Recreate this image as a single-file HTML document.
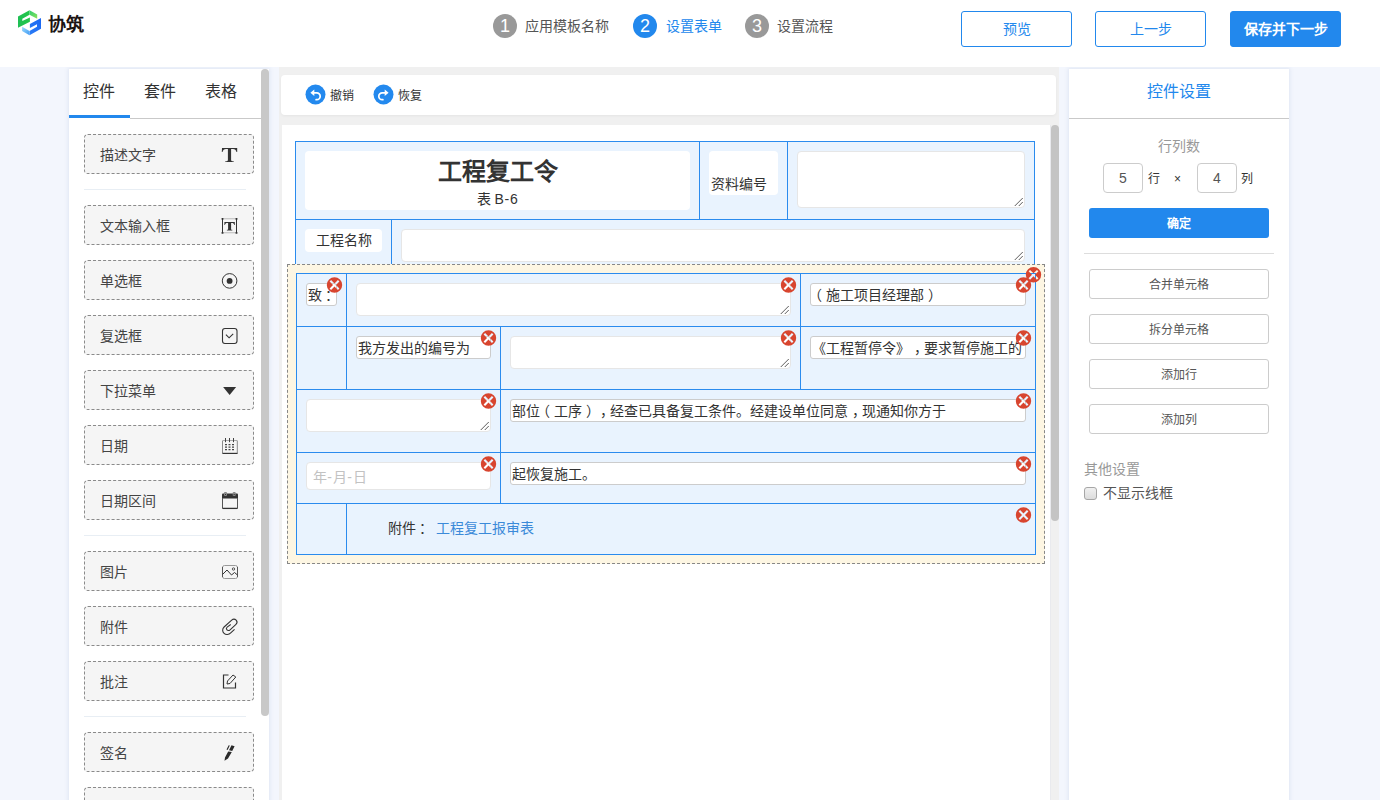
<!DOCTYPE html>
<html lang="zh-CN">
<head>
<meta charset="utf-8">
<title>设置表单</title>
<style>
*{box-sizing:border-box;margin:0;padding:0}
html,body{width:1380px;height:800px;overflow:hidden}
body{text-spacing-trim:space-all;position:relative;background:#f3f6fd;font-family:"Liberation Sans",sans-serif;font-size:14px;color:#333}
.abs{position:absolute}
.t{position:absolute;white-space:nowrap;line-height:20px;height:20px}
/* header */
#hdr{position:absolute;left:0;top:0;width:1380px;height:67px;background:#fff;z-index:5}
.stepc{position:absolute;top:14px;width:24px;height:24px;border-radius:12px;background:#999;color:#fff;font-size:18px;line-height:24px;text-align:center}
.stepc.on{background:#2288ed}
.stept{position:absolute;top:16px;line-height:20px;font-size:14px;color:#555;white-space:nowrap}
.hbtn{position:absolute;top:11px;width:111px;height:36px;border:1px solid #2288ed;border-radius:3px;background:#fff;color:#2288ed;font-size:14px;line-height:34px;text-align:center}
.hbtn.pri{background:#2288ed;color:#fff;font-weight:bold}
/* left */
#left{position:absolute;left:69px;top:69px;width:200px;height:731px;background:#fff}
#lsh{position:absolute;left:69px;top:69px;width:200px;height:740px;box-shadow:0 0 4px 1px rgba(90,120,170,.12)}
.tab{position:absolute;top:0;height:49px;width:61px;font-size:16px;line-height:46px;text-align:center;color:#333;padding-right:2px}
.item{position:absolute;left:15px;width:170px;height:40px;border:1px dashed #8a8a8a;border-radius:4px;background:#f5f5f5}
.item span{position:absolute;left:15px;top:10px;line-height:20px;font-size:14px;color:#444}
.item svg{position:absolute;left:125px;top:-1px;width:40px;height:40px;overflow:visible}
.div{position:absolute;left:15px;width:162px;height:1px;background:#e8eef4}
/* center */
#mid{position:absolute;left:279px;top:67px;width:780px;height:733px;background:#f0f0f0}
#tool{position:absolute;left:281px;top:75px;width:775px;height:40px;background:#fff;border-radius:4px;box-shadow:0 1px 3px rgba(0,0,0,.05)}
#canvas{position:absolute;left:282px;top:125px;width:769px;height:675px;background:#fff;border-right:1px solid #e9eaee}
.ln{position:absolute;background:#2a8bee}
.cell{position:absolute;background:#e9f3fe}
.wb{position:absolute;background:#fff;border-radius:4px}
.ta{position:absolute;background:#fff;border:1px solid #e6e6e6;border-radius:4px}
.inp{position:absolute;background:#fff;border:1px solid #ccc;border-radius:3px;height:23px;font-size:14px;line-height:22px;color:#333;white-space:nowrap;overflow:hidden;padding-left:1px}
.p{font-style:normal;display:inline-block;width:14px;position:relative}
.x{position:absolute;width:16px;height:16px;overflow:visible}
/* right */
#right{position:absolute;left:1069px;top:69px;width:220px;height:740px;background:#fff;box-shadow:0 0 4px 1px rgba(90,120,170,.12)}
.rbtn{position:absolute;left:20px;width:180px;height:30px;border:1px solid #ccc;border-radius:3px;background:#fff;font-size:12px;line-height:30px;text-align:center;color:#555}
.num{position:absolute;top:94px;width:40px;height:30px;border:1px solid #ccc;border-radius:4px;font-size:14px;line-height:28px;text-align:center;color:#555;background:#fff}
</style>
</head>
<body>
<!--HEADER-->
<div id="hdr">
<svg class="abs" style="left:14px;top:6px" width="32" height="34" viewBox="14 6 32 34">
<defs>
<linearGradient id="g1" x1="0" y1="0" x2="1" y2="0"><stop offset="0" stop-color="#1fbf55"/><stop offset="1" stop-color="#22c648"/></linearGradient>
<linearGradient id="g2" x1="0" y1="0" x2="1" y2="1"><stop offset="0" stop-color="#2ecc71"/><stop offset="1" stop-color="#8be35a"/></linearGradient>
<linearGradient id="g3" x1="0" y1="1" x2="1" y2="0"><stop offset="0" stop-color="#2a7df6"/><stop offset="1" stop-color="#1a66f2"/></linearGradient>
<linearGradient id="g4" x1="0" y1="0" x2="1" y2="1"><stop offset="0" stop-color="#9bd8fb"/><stop offset="1" stop-color="#3f9cf5"/></linearGradient>
</defs>
<polygon fill="url(#g1)" points="18,16.4 29.5,10.2 29.5,14.7 22.3,18.7 22.3,21.1 29.9,17.4 29.9,21.7 18,27.7"/>
<polygon fill="url(#g2)" points="29.5,10.2 37.2,14.5 37.2,18.8 29.5,14.7"/>
<polygon fill="url(#g3)" points="41,18.1 29.9,24.1 29.9,28 37,24.3 37,26.8 29.5,30.9 29.5,35.3 41,28.7"/>
<polygon fill="url(#g4)" points="22.1,26.8 29.5,30.9 29.5,35.3 22.1,31.1"/>
</svg>
<div class="t" style="left:48px;top:15px;font-size:18px;font-weight:bold;color:#1c1413;letter-spacing:0px">协筑</div>
<div class="stepc" style="left:493px">1</div><div class="stept" style="left:525px">应用模板名称</div>
<div class="stepc on" style="left:633px">2</div><div class="stept" style="left:666px;color:#2288ed">设置表单</div>
<div class="stepc" style="left:745px">3</div><div class="stept" style="left:777px">设置流程</div>
<div class="hbtn" style="left:961px">预览</div>
<div class="hbtn" style="left:1095px">上一步</div>
<div class="hbtn pri" style="left:1230px">保存并下一步</div>
</div>
<!--/HEADER-->
<!--LEFT-->
<div id="lsh"></div>
<div id="left">
<div class="tab" style="left:0;border-bottom:3px solid #2288ed">控件</div>
<div class="tab" style="left:61px">套件</div>
<div class="tab" style="left:122px">表格</div>
<div class="abs" style="left:61px;top:49px;width:131px;height:1px;background:#c9c9c9"></div>

<div class="item" style="top:65px"><span>描述文字</span>
<svg style="top:0" viewBox="0 0 40 40"><path fill="#333" d="M12 13h15.200v4h-.7c-.5-2.100-1.500-3-3.500-3h-1.900v11c0 .9.700 1.200 2.600 1.300v.7h-8.400v-.7c1.900-.1 2.600-.4 2.600-1.300v-11h-1.900c-2 0-3 .9-3.500 3h-.7z"/></svg></div>
<div class="div" style="top:120px"></div>
<div class="item" style="top:136px"><span>文本输入框</span>
<svg viewBox="0 0 40 40"><path fill="none" stroke="#bbb" stroke-width="1" d="M13 13.750h13M13 27.750h13"/><path fill="none" stroke="#333" stroke-width="1" d="M12.500 13.500v14.500M26.500 13.500v14.500"/><path fill="#333" d="M11.600 12.900h1.800v1.800h-1.800zM25.600 12.900h1.800v1.800h-1.800zM11.600 26.900h1.800v1.800h-1.800zM25.600 26.900h1.800v1.800h-1.800z"/><path fill="#333" d="M14.400 17h10.400v2.900h-.6c-.3-1.400-1-2-2.300-2h-.8v6c0 .6.300.8 1.200.9v.6h-5.400v-.6c.9-.1 1.200-.3 1.200-.9v-6h-.8c-1.300 0-2 .6-2.300 2h-.6z"/></svg></div>
<div class="item" style="top:191px"><span>单选框</span>
<svg viewBox="0 0 40 40"><circle cx="19.600" cy="20.900" r="7.300" fill="none" stroke="#333" stroke-width="1"/><circle cx="19.600" cy="20.900" r="2.900" fill="#333"/></svg></div>
<div class="item" style="top:246px"><span>复选框</span>
<svg viewBox="0 0 40 40"><rect x="12.500" y="13.500" width="14.500" height="15" rx="2.500" fill="none" stroke="#333" stroke-width="1.100"/><path d="M15.900 19.600l3.200 3.200 4.100-4" fill="none" stroke="#333" stroke-width="1.100"/></svg></div>
<div class="item" style="top:301px"><span>下拉菜单</span>
<svg viewBox="0 0 40 40"><path fill="#333" d="M13.100 17h13l-6.500 8z"/></svg></div>
<div class="item" style="top:356px"><span>日期</span>
<svg viewBox="0 0 40 40"><path fill="none" stroke="#aaa" stroke-width="1" d="M13 15.500h14"/><path fill="none" stroke="#8a8a8a" stroke-width="1" d="M12.500 15.500v13M27.300 15.500v13"/><path fill="none" stroke="#333" stroke-width="1.200" d="M12.500 28.400h15"/><path fill="none" stroke="#444" stroke-width="1" d="M15.500 13v4.200M19.500 13v4.200M23.500 13v4.200"/><path fill="#444" d="M15 19h2v1.200h-2zM18.500 19h2v1.200h-2zM22 19h2v1.200h-2zM15 21.500h2v1.200h-2zM18.500 21.500h2v1.200h-2zM22 21.500h2v1.200h-2zM15 24h2v1.200h-2zM18.500 24h2v1.200h-2zM22 24h2v1.200h-2z"/></svg></div>
<div class="item" style="top:411px"><span>日期区间</span>
<svg viewBox="0 0 40 40"><path fill="#333" d="M12 14.500q0-1 1-1h14q1 0 1 1v4h-16z"/><path fill="none" stroke="#555" stroke-width="1" d="M12.500 18v10.500M27.500 18v10.500"/><path fill="none" stroke="#333" stroke-width="1.300" d="M12.500 28.400h15"/><path fill="none" stroke="#888" stroke-width="1" d="M14.500 12.500h2v3h-2zM23.200 12.500h2v3h-2z"/></svg></div>
<div class="div" style="top:466px"></div>
<div class="item" style="top:482px"><span>图片</span>
<svg viewBox="0 0 40 40"><rect x="12.500" y="14.500" width="15" height="13" rx="2" fill="none" stroke="#999" stroke-width="1"/><path fill="none" stroke="#555" stroke-width="1" d="M12.500 16v10M27.500 16v10"/><path d="M12.500 23.500l4.500-4.500 4.500 5 3-2.500 3 2.500" fill="none" stroke="#333" stroke-width="1"/><circle cx="23.500" cy="18" r="1.200" fill="none" stroke="#444" stroke-width="0.900"/></svg></div>
<div class="item" style="top:537px"><span>附件</span>
<svg viewBox="0 0 40 40"><path d="M24.500 23.250L20.500 27C18.500 29 15.500 29.500 13.500 27.500C11.500 25.500 11.500 22.700 13.500 20.800L21.500 13.500C23 12.300 25 12.400 26.200 13.700C27.400 15 27.300 16.800 26 18L19.800 23.800C18.800 24.800 17.300 24.800 16.500 23.900C15.700 23 15.800 21.700 16.700 20.900L20.500 18.250" fill="none" stroke="#333" stroke-width="1.150" transform="translate(19.500 20.800) scale(.95) translate(-19.200 -20.600)"/></svg></div>
<div class="item" style="top:592px"><span>批注</span>
<svg viewBox="0 0 40 40"><g transform="translate(0 -.5)"><path d="M18.500 14.500h-5v13h12v-5.500" fill="none" stroke="#333" stroke-width="1.200"/><path d="M17 23.500l.5-3 5.500-6 2.800 2-5.800 6.500z" fill="none" stroke="#333" stroke-width="1"/></g></svg></div>
<div class="div" style="top:647px"></div>
<div class="item" style="top:663px"><span>签名</span>
<svg viewBox="0 0 40 40"><path fill="#2a2a2a" d="M18.200 19.500l3.600.5-3.800 6.500-3.500 2.300.5-3.300zM21.500 13.200l3.100 1-2.400 4.800-3.200-.700zM18.700 13.300l1.100.3-2.200 4.400-1.100-.400z"/></svg></div>
<div class="item" style="top:718px"></div>
</div>
<div class="abs" style="left:261px;top:69px;width:8px;height:647px;border-radius:4px;background:#c8c8c8"></div>
<!--/LEFT-->
<!--MID-->
<div id="mid"></div>
<div id="tool"></div>
<svg class="abs" style="left:305px;top:84px" width="21" height="21" viewBox="0 0 21 21"><circle cx="10.500" cy="10.500" r="10" fill="#2389ee"/><path d="M9 8.900h2.800a3.400 3.400 0 0 1 0 6.800h-.7" fill="none" stroke="#fff" stroke-width="1.700" stroke-linecap="round"/><path d="M5.400 8.800l3.900-3.300v6.600z" fill="#fff"/></svg>
<div class="t" style="left:330px;top:86px;font-size:12px;color:#333">撤销</div>
<svg class="abs" style="left:373px;top:84px" width="21" height="21" viewBox="0 0 21 21"><circle cx="10.500" cy="10.500" r="10" fill="#2389ee"/><path d="M12 8.900h-2.800a3.400 3.400 0 0 0 0 6.800h.7" fill="none" stroke="#fff" stroke-width="1.700" stroke-linecap="round"/><path d="M15.600 8.800l-3.900-3.300v6.600z" fill="#fff"/></svg>
<div class="t" style="left:398px;top:86px;font-size:12px;color:#333">恢复</div>
<div id="canvas"></div>
<div class="cell" style="left:295px;top:141px;width:740px;height:124px;"></div>
<div class="ln" style="left:295px;top:141px;width:740px;height:1px;"></div>
<div class="ln" style="left:295px;top:219px;width:740px;height:1px;"></div>
<div class="ln" style="left:295px;top:141px;width:1px;height:124px;"></div>
<div class="ln" style="left:1034px;top:141px;width:1px;height:124px;"></div>
<div class="ln" style="left:699px;top:141px;width:1px;height:78px;"></div>
<div class="ln" style="left:787px;top:141px;width:1px;height:78px;"></div>
<div class="ln" style="left:391px;top:219px;width:1px;height:46px;"></div>
<div class="wb" style="left:305px;top:151px;width:385px;height:59px;"></div>
<div class="t" style="left:305px;top:157px;width:385px;text-align:center;font-size:24px;font-weight:bold;line-height:30px;height:30px;color:#333">工程复工令</div>
<div class="t" style="left:305px;top:189px;width:385px;text-align:center;font-size:14px;color:#333">表 <span style="letter-spacing:.7px">B-6</span></div>
<div class="wb" style="left:709px;top:151px;width:69px;height:44px;"></div>
<div class="t" style="left:711px;top:174px;color:#333">资料编号</div>
<div class="ta" style="left:797px;top:151px;width:228px;height:57px;"><svg class="abs" style="right:0;bottom:0" width="12" height="12" viewBox="0 0 12 12"><path d="M2.750 11L10.750 3M6.750 11L10.750 7" stroke="#4a4a4a" stroke-width=".9" fill="none"/></svg></div>
<div class="wb" style="left:305px;top:229px;width:77px;height:23px;"></div>
<div class="t" style="left:305px;top:230px;width:77px;text-align:center;color:#333">工程名称</div>
<div class="ta" style="left:401px;top:229px;width:624px;height:33px;"><svg class="abs" style="right:0;bottom:0" width="12" height="12" viewBox="0 0 12 12"><path d="M2.750 11L10.750 3M6.750 11L10.750 7" stroke="#4a4a4a" stroke-width=".9" fill="none"/></svg></div>
<div class="abs" style="left:287px;top:264px;width:758px;height:300px;background:#fdf6e3;border:1px dashed #888"></div>
<div class="cell" style="left:296px;top:273px;width:740px;height:282px;"></div>
<div class="ln" style="left:296px;top:273px;width:740px;height:1px;"></div>
<div class="ln" style="left:296px;top:326px;width:740px;height:1px;"></div>
<div class="ln" style="left:296px;top:389px;width:740px;height:1px;"></div>
<div class="ln" style="left:296px;top:452px;width:740px;height:1px;"></div>
<div class="ln" style="left:296px;top:503px;width:740px;height:1px;"></div>
<div class="ln" style="left:296px;top:554px;width:740px;height:1px;"></div>
<div class="ln" style="left:296px;top:273px;width:1px;height:282px;"></div>
<div class="ln" style="left:1035px;top:273px;width:1px;height:282px;"></div>
<div class="ln" style="left:346px;top:273px;width:1px;height:116px;"></div>
<div class="ln" style="left:800px;top:273px;width:1px;height:116px;"></div>
<div class="ln" style="left:500px;top:326px;width:1px;height:177px;"></div>
<div class="ln" style="left:346px;top:503px;width:1px;height:52px;"></div>
<div class="inp" style="left:306px;top:283px;width:31px;height:23px;">致<i class="p" style="left:3px">：</i></div>
<div class="ta" style="left:356px;top:283px;width:435px;height:33px;"><svg class="abs" style="right:0;bottom:0" width="12" height="12" viewBox="0 0 12 12"><path d="M2.750 11L10.750 3M6.750 11L10.750 7" stroke="#4a4a4a" stroke-width=".9" fill="none"/></svg></div>
<div class="inp" style="left:810px;top:283px;width:216px;height:23px;"><i class="p" style="left:-4px">（</i>施工项目经理部<i class="p" style="left:4px">）</i></div>
<div class="inp" style="left:356px;top:336px;width:135px;height:23px;">我方发出的编号为</div>
<div class="ta" style="left:510px;top:336px;width:281px;height:33px;"><svg class="abs" style="right:0;bottom:0" width="12" height="12" viewBox="0 0 12 12"><path d="M2.750 11L10.750 3M6.750 11L10.750 7" stroke="#4a4a4a" stroke-width=".9" fill="none"/></svg></div>
<div class="inp" style="left:810px;top:336px;width:216px;height:23px;">《工程暂停令》<i class="p" style="left:3.5px">，</i>要求暂停施工的</div>
<div class="ta" style="left:306px;top:399px;width:185px;height:33px;"><svg class="abs" style="right:0;bottom:0" width="12" height="12" viewBox="0 0 12 12"><path d="M2.750 11L10.750 3M6.750 11L10.750 7" stroke="#4a4a4a" stroke-width=".9" fill="none"/></svg></div>
<div class="inp" style="left:510px;top:399px;width:516px;height:23px;">部位<i class="p" style="left:-4px">（</i>工序<i class="p" style="left:4px">）</i><i class="p" style="left:3.5px">，</i>经查已具备复工条件。经建设单位同意<i class="p" style="left:3.5px">，</i>现通知你方于</div>
<div class="ta" style="left:306px;top:462px;width:185px;height:28px;border-color:#e6e6e6"><div class="t" style="left:5.500px;top:4px;color:#c2c2c2;letter-spacing:.7px">年-月-日</div></div>
<div class="inp" style="left:510px;top:462px;width:516px;height:23px;">起恢复施工。</div>
<div class="t" style="left:388px;top:518px;color:#333">附件<i class="p" style="left:3px">：</i><span style="color:#3b8ad9;margin-left:5.5px">工程复工报审表</span></div>
<svg class="x" style="left:1025px;top:267px" viewBox="0 0 16 16"><path fill="#d8452f" fill-rule="evenodd" transform="translate(8.5 7.8) rotate(45)" d="M-7.700 0a7.700 7.700 0 1 0 15.400 0a7.700 7.700 0 1 0-15.400 0zM-1.050-5.900h2.100v4.850h4.850v2.100h-4.850v4.850h-2.100v-4.850h-4.850v-2.100h4.850z"/></svg>
<svg class="x" style="left:327px;top:277px" viewBox="0 0 16 16"><path fill="#d8452f" fill-rule="evenodd" transform="translate(7.5 8) rotate(45)" d="M-7.700 0a7.700 7.700 0 1 0 15.400 0a7.700 7.700 0 1 0-15.400 0zM-1.050-5.900h2.100v4.850h4.850v2.100h-4.850v4.850h-2.100v-4.850h-4.850v-2.100h4.850z"/></svg>
<svg class="x" style="left:781px;top:277px" viewBox="0 0 16 16"><path fill="#d8452f" fill-rule="evenodd" transform="translate(7.5 8) rotate(45)" d="M-7.700 0a7.700 7.700 0 1 0 15.400 0a7.700 7.700 0 1 0-15.400 0zM-1.050-5.900h2.100v4.850h4.850v2.100h-4.850v4.850h-2.100v-4.850h-4.850v-2.100h4.850z"/></svg>
<svg class="x" style="left:1016px;top:277px" viewBox="0 0 16 16"><path fill="#d8452f" fill-rule="evenodd" transform="translate(7.5 8) rotate(45)" d="M-7.700 0a7.700 7.700 0 1 0 15.400 0a7.700 7.700 0 1 0-15.400 0zM-1.050-5.900h2.100v4.850h4.850v2.100h-4.850v4.850h-2.100v-4.850h-4.850v-2.100h4.850z"/></svg>
<svg class="x" style="left:481px;top:330px" viewBox="0 0 16 16"><path fill="#d8452f" fill-rule="evenodd" transform="translate(7.5 8) rotate(45)" d="M-7.700 0a7.700 7.700 0 1 0 15.400 0a7.700 7.700 0 1 0-15.400 0zM-1.050-5.900h2.100v4.850h4.850v2.100h-4.850v4.850h-2.100v-4.850h-4.850v-2.100h4.850z"/></svg>
<svg class="x" style="left:781px;top:330px" viewBox="0 0 16 16"><path fill="#d8452f" fill-rule="evenodd" transform="translate(7.5 8) rotate(45)" d="M-7.700 0a7.700 7.700 0 1 0 15.400 0a7.700 7.700 0 1 0-15.400 0zM-1.050-5.900h2.100v4.850h4.850v2.100h-4.850v4.850h-2.100v-4.850h-4.850v-2.100h4.850z"/></svg>
<svg class="x" style="left:1016px;top:330px" viewBox="0 0 16 16"><path fill="#d8452f" fill-rule="evenodd" transform="translate(7.5 8) rotate(45)" d="M-7.700 0a7.700 7.700 0 1 0 15.400 0a7.700 7.700 0 1 0-15.400 0zM-1.050-5.900h2.100v4.850h4.850v2.100h-4.850v4.850h-2.100v-4.850h-4.850v-2.100h4.850z"/></svg>
<svg class="x" style="left:481px;top:393px" viewBox="0 0 16 16"><path fill="#d8452f" fill-rule="evenodd" transform="translate(7.5 8) rotate(45)" d="M-7.700 0a7.700 7.700 0 1 0 15.400 0a7.700 7.700 0 1 0-15.400 0zM-1.050-5.900h2.100v4.850h4.850v2.100h-4.850v4.850h-2.100v-4.850h-4.850v-2.100h4.850z"/></svg>
<svg class="x" style="left:1016px;top:393px" viewBox="0 0 16 16"><path fill="#d8452f" fill-rule="evenodd" transform="translate(7.5 8) rotate(45)" d="M-7.700 0a7.700 7.700 0 1 0 15.400 0a7.700 7.700 0 1 0-15.400 0zM-1.050-5.900h2.100v4.850h4.850v2.100h-4.850v4.850h-2.100v-4.850h-4.850v-2.100h4.850z"/></svg>
<svg class="x" style="left:481px;top:456px" viewBox="0 0 16 16"><path fill="#d8452f" fill-rule="evenodd" transform="translate(7.5 8) rotate(45)" d="M-7.700 0a7.700 7.700 0 1 0 15.400 0a7.700 7.700 0 1 0-15.400 0zM-1.050-5.900h2.100v4.850h4.850v2.100h-4.850v4.850h-2.100v-4.850h-4.850v-2.100h4.850z"/></svg>
<svg class="x" style="left:1016px;top:456px" viewBox="0 0 16 16"><path fill="#d8452f" fill-rule="evenodd" transform="translate(7.5 8) rotate(45)" d="M-7.700 0a7.700 7.700 0 1 0 15.400 0a7.700 7.700 0 1 0-15.400 0zM-1.050-5.900h2.100v4.850h4.850v2.100h-4.850v4.850h-2.100v-4.850h-4.850v-2.100h4.850z"/></svg>
<svg class="x" style="left:1016px;top:507px" viewBox="0 0 16 16"><path fill="#d8452f" fill-rule="evenodd" transform="translate(7.5 8) rotate(45)" d="M-7.700 0a7.700 7.700 0 1 0 15.400 0a7.700 7.700 0 1 0-15.400 0zM-1.050-5.900h2.100v4.850h4.850v2.100h-4.850v4.850h-2.100v-4.850h-4.850v-2.100h4.850z"/></svg>
<div class="abs" style="left:1051px;top:125px;width:8px;height:396px;background:#c4c4c4;border-radius:4px"></div>
<!--/MID-->
<!--RIGHT-->
<div id="right">
<div class="t" style="left:0;top:12px;width:220px;text-align:center;font-size:16px;color:#2288ed;line-height:22px;height:22px">控件设置</div>
<div class="abs" style="left:0;top:49px;width:220px;height:1px;background:#c9c9c9"></div>
<div class="t" style="left:0;top:67px;width:220px;text-align:center;color:#999">行列数</div>
<div class="num" style="left:34px">5</div>
<div class="t" style="left:79px;top:100px;font-size:12px;color:#333">行</div>
<div class="t" style="left:105px;top:100px;font-size:12px;color:#333">×</div>
<div class="num" style="left:128px">4</div>
<div class="t" style="left:172px;top:100px;font-size:12px;color:#333">列</div>
<div class="abs" style="left:20px;top:139px;width:180px;height:30px;border-radius:3px;background:#2288ed;color:#fff;font-size:12px;font-weight:bold;line-height:30px;padding-top:1px;text-align:center">确定</div>
<div class="abs" style="left:15px;top:184px;width:190px;height:1px;background:#ddd"></div>
<div class="rbtn" style="top:200px">合并单元格</div>
<div class="rbtn" style="top:245px">拆分单元格</div>
<div class="rbtn" style="top:290px">添加行</div>
<div class="rbtn" style="top:335px">添加列</div>
<div class="t" style="left:15px;top:390px;color:#999">其他设置</div>
<div class="abs" style="left:15px;top:418px;width:13px;height:13px;border:1px solid #a6a6a6;border-radius:3px;background:linear-gradient(#f0f0f0,#dcdcdc)"></div>
<div class="t" style="left:34px;top:414px;color:#555">不显示线框</div>
</div>
<!--/RIGHT-->
</body>
</html>
